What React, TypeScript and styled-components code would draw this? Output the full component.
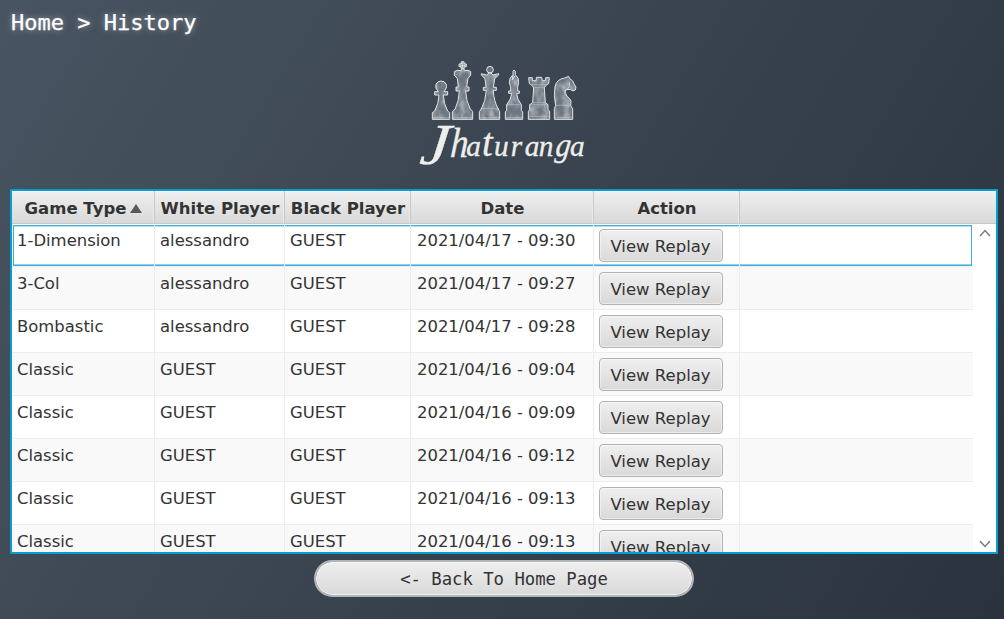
import React from "react";
import styled, { createGlobalStyle, css } from "styled-components";

const Global = createGlobalStyle`
  * { box-sizing: border-box; }
  body { margin: 0; }
`;

const Screen = styled.main`
  width: 1004px;
  height: 619px;
  padding: 0 6px 0 10px;
  display: flex;
  flex-direction: column;
  align-items: center;
  overflow: hidden;
  background: linear-gradient(121.65deg, #485461 0%, #2a333d 100%);
  font-family: "DejaVu Sans", sans-serif;
  color: #333;
`;

const Breadcrumb = styled.h1`
  align-self: flex-start;
  height: 50px;
  margin: 0;
  padding: 9px 0 0 1px;
  font: 22px/28px "DejaVu Sans Mono", monospace;
  color: #fff;
  -webkit-text-stroke: 0.25px #fff;
  text-shadow: 0 0 6px rgba(255, 255, 255, 0.5);
  white-space: pre;
`;

const LogoArt = styled.svg`
  display: block;
  flex: none;
  width: 200px;
  height: 130px;
  margin-right: 8px;
`;

const TableFrame = styled.section`
  width: 988px;
  height: 365px;
  margin-top: 9px;
  flex: none;
  display: flex;
  flex-direction: column;
  border: 2px solid #039ed3;
  background: #fff;
  overflow: hidden;
`;

const columns = "143px 130px 126px 183px 146px 1fr";

const HeaderRow = styled.div`
  flex: none;
  height: 33px;
  display: grid;
  grid-template-columns: ${columns};
  background: linear-gradient(#efefef, #d9d9d9);
  border-bottom: 1px solid #c8c8c8;
  box-shadow: inset 0 1px #fbfbfb;
`;

const HeaderCell = styled.div`
  display: flex;
  align-items: center;
  justify-content: center;
  gap: 4px;
  padding: 2px 0 0 1px;
  font-size: 16.5px;
  font-weight: bold;
  white-space: nowrap;
  &:not(:last-child) {
    border-right: 1px solid #c6c6c6;
    box-shadow: inset -1px 0 #ececec;
  }
`;

const SortArrow = styled.svg`
  width: 12px;
  height: 9px;
`;

const Body = styled.div`
  flex: 1;
  min-height: 0;
  display: flex;
`;

const Rows = styled.div`
  flex: 1;
  overflow: hidden;
`;

const Row = styled.div<{ $focused?: boolean; $odd?: boolean }>`
  position: relative;
  height: 43px;
  display: grid;
  grid-template-columns: ${columns};
  background: ${(p) => (p.$odd ? "#f9f9f9" : "#fff")};
  border-bottom: 1px solid #ededed;
  ${(p) =>
    p.$focused &&
    css`
      &::before {
        content: "";
        position: absolute;
        inset: 1px 1px 0 1px;
        border: 1px solid #3fb0d8;
        box-shadow: inset 0 1px #b5e0f0, inset 0 -1px #8fd2ea;
      }
    `}
`;

const Cell = styled.div`
  position: relative;
  padding: 5px 0 0 5px;
  font-size: 16.45px;
  line-height: 23px;
  white-space: nowrap;
  &:nth-child(4) {
    padding-left: 6px;
  }
  &:not(:last-child) {
    border-right: 1px solid #ececec;
  }
`;

const ReplayButton = styled.button`
  display: block;
  width: 124px;
  height: 33px;
  padding: 1px 1px 0 0;
  border: 1px solid #b2b2b2;
  border-radius: 4px;
  background: linear-gradient(#efefef, #d9d9d9);
  box-shadow: inset 0 0 0 1px rgba(255, 255, 255, 0.45);
  font: 16.5px "DejaVu Sans", sans-serif;
  color: #333;
`;

const ScrollBar = styled.div`
  width: 23px;
  padding: 5px 0 4px;
  display: flex;
  flex-direction: column;
  align-items: center;
  justify-content: space-between;
`;

const ScrollArrow = styled.svg`
  width: 12px;
  height: 8px;
  fill: none;
  stroke: #7b7b7b;
  stroke-width: 1.5;
`;

const BackButton = styled.button`
  flex: none;
  width: 380px;
  height: 37px;
  margin: 6px 0 0;
  padding: 0;
  border: 2px solid #b3b6b9;
  border-radius: 19px;
  background: linear-gradient(#efefef, #d9d9d9) padding-box;
  box-shadow: inset 0 0 0 1px rgba(255, 255, 255, 0.6);
  font: 17.25px "DejaVu Sans Mono", monospace;
  color: #333;
`;

const pieces = [
  // pawn
  "M97 208V188L104 183Q116 162 117 135H104V125H115Q104 114 108 103Q113 93 123 93Q134 93 139 103Q142 114 132 125H143V135H130Q131 162 143 183L149 188V208Z",
  // king
  "M157 208V185Q160 180 165 178Q177 153 178 123H168V111H175L172 85L163 76V65Q170 58 183 62L185 56H192L194 62Q206 58 212 65V76L204 85L200 111H207V123H197Q198 153 211 178Q216 180 218 185V208Z",
  // queen
  "M238 208V185L244 177Q257 153 259 121H250V112H258L255 86L244 75V71L260 75L267 69H273L279 75L296 71V75L284 86L280 112H289V121H280Q281 153 295 177L299 185V208Z",
  // bishop
  "M316 208V186L320 181V164Q334 148 335 130H326V123H332V111L328 98Q327 83 339 74V64L342 60L346 64V74Q358 84 356 98L353 111V123H358V130H350Q351 148 364 164V181L368 186V208Z",
  // rook
  "M385 208V185L389 178V164L398 158L401 113L394 104L388 101L386 83H397V92H408L409 82H425L427 92H436L437 83H448L446 101L440 104L433 113L436 158L444 164V178L449 185V208Z",
  // knight
  "M463 208V176L467 166Q460 137 465 110Q470 87 494 84L506 79L509 86Q520 91 522 102L528 111L526 120L519 123Q512 116 501 119L495 122Q492 130 501 139Q511 146 513 153L512 166L518 177V208Z",
];

const trims =
  "M98 203H148M158 203H217M239 203H298M317 203H367M386 199H448M463 202H518" +
  "M241 176H297M320 164H364M389 164H444M398 158H436M394 104H440M398 113H435M467 166H512";

function Logo() {
  return (
    <LogoArt viewBox="0 0 600 390" role="img" aria-label="Jhaturanga">
      <defs>
        <filter id="grain" x="0" y="0" width="100%" height="100%">
          <feTurbulence type="fractalNoise" baseFrequency="0.045 0.03" numOctaves="3" seed="4" />
          <feColorMatrix values="0 0 0 0 0.6  0 0 0 0 0.63  0 0 0 0 0.66  1.4 0 0 0 -0.5" />
          <feComposite in2="SourceGraphic" operator="in" />
        </filter>
      </defs>
      <g fill="#6d7782">
        {pieces.map((d) => (
          <path key={d} d={d} />
        ))}
        <circle cx="188" cy="46" r="11" />
        <circle cx="270" cy="59" r="10" />
      </g>
      <g filter="url(#grain)">
        {pieces.map((d) => (
          <path key={d} d={d} />
        ))}
      </g>
      <g fill="none" stroke="#e2e3e4" strokeWidth="3" strokeLinejoin="round">
        {pieces.map((d) => (
          <path key={d} d={d} />
        ))}
        <circle cx="270" cy="59" r="10" />
        <path d="M184 56V50H177V42H184V35H192V42H199V50H192V56M188 37V55M179 46H197" />
        <path d="M339 75L337 89L345 78" />
        <path d="M501 119Q513 105 508 96M495 122L501 139" strokeWidth="2" />
        <path d={trims} strokeWidth="2" opacity="0.6" />
      </g>
      <g
        fontFamily="Liberation Serif, serif"
        fontStyle="italic"
        fill="#eeeeec"
        stroke="#eeeeec"
        strokeWidth="1"
      >
        <text transform="translate(56 342) scale(1.12 1) skewX(-6)" fontSize="174">J</text>
        <text transform="translate(149 322) scale(0.86 1) skewX(-4)" fontSize="126">h</text>
        <text transform="translate(246 319) scale(0.95 1)" fontSize="122">t</text>
        <text x="199" y="319" fontSize="88">a</text>
        <text x="282 332 374 416" y="319" fontSize="88">uran</text>
        <text transform="translate(464 319) scale(0.9 1) skewX(-8)" fontSize="100" >g</text>
        <text x="510" y="319" fontSize="88">a</text>
      </g>
    </LogoArt>
  );
}

const games = [
  ["1-Dimension", "alessandro", "GUEST", "2021/04/17 - 09:30"],
  ["3-Col", "alessandro", "GUEST", "2021/04/17 - 09:27"],
  ["Bombastic", "alessandro", "GUEST", "2021/04/17 - 09:28"],
  ["Classic", "GUEST", "GUEST", "2021/04/16 - 09:04"],
  ["Classic", "GUEST", "GUEST", "2021/04/16 - 09:09"],
  ["Classic", "GUEST", "GUEST", "2021/04/16 - 09:12"],
  ["Classic", "GUEST", "GUEST", "2021/04/16 - 09:13"],
  ["Classic", "GUEST", "GUEST", "2021/04/16 - 09:13"],
];

export default function App() {
  return (
    <>
      <Global />
      <Screen>
        <Breadcrumb>Home &gt; History</Breadcrumb>
        <Logo />
        <TableFrame>
          <HeaderRow>
            <HeaderCell>
              Game Type
              <SortArrow viewBox="0 0 12 9">
                <path d="M0 9L6 0L12 9Z" fill="#595959" />
              </SortArrow>
            </HeaderCell>
            <HeaderCell>White Player</HeaderCell>
            <HeaderCell>Black Player</HeaderCell>
            <HeaderCell>Date</HeaderCell>
            <HeaderCell>Action</HeaderCell>
            <HeaderCell />
          </HeaderRow>
          <Body>
            <Rows>
              {games.map((game, i) => (
                <Row key={i} $focused={i === 0} $odd={i % 2 === 1}>
                  {game.map((value, j) => (
                    <Cell key={j}>{value}</Cell>
                  ))}
                  <Cell>
                    <ReplayButton>View Replay</ReplayButton>
                  </Cell>
                  <Cell />
                </Row>
              ))}
            </Rows>
            <ScrollBar>
              <ScrollArrow viewBox="0 0 12 8">
                <path d="M1 7L6 1.5L11 7" />
              </ScrollArrow>
              <ScrollArrow viewBox="0 0 12 8">
                <path d="M1 1L6 6.5L11 1" />
              </ScrollArrow>
            </ScrollBar>
          </Body>
        </TableFrame>
        <BackButton>&lt;- Back To Home Page</BackButton>
      </Screen>
    </>
  );
}
